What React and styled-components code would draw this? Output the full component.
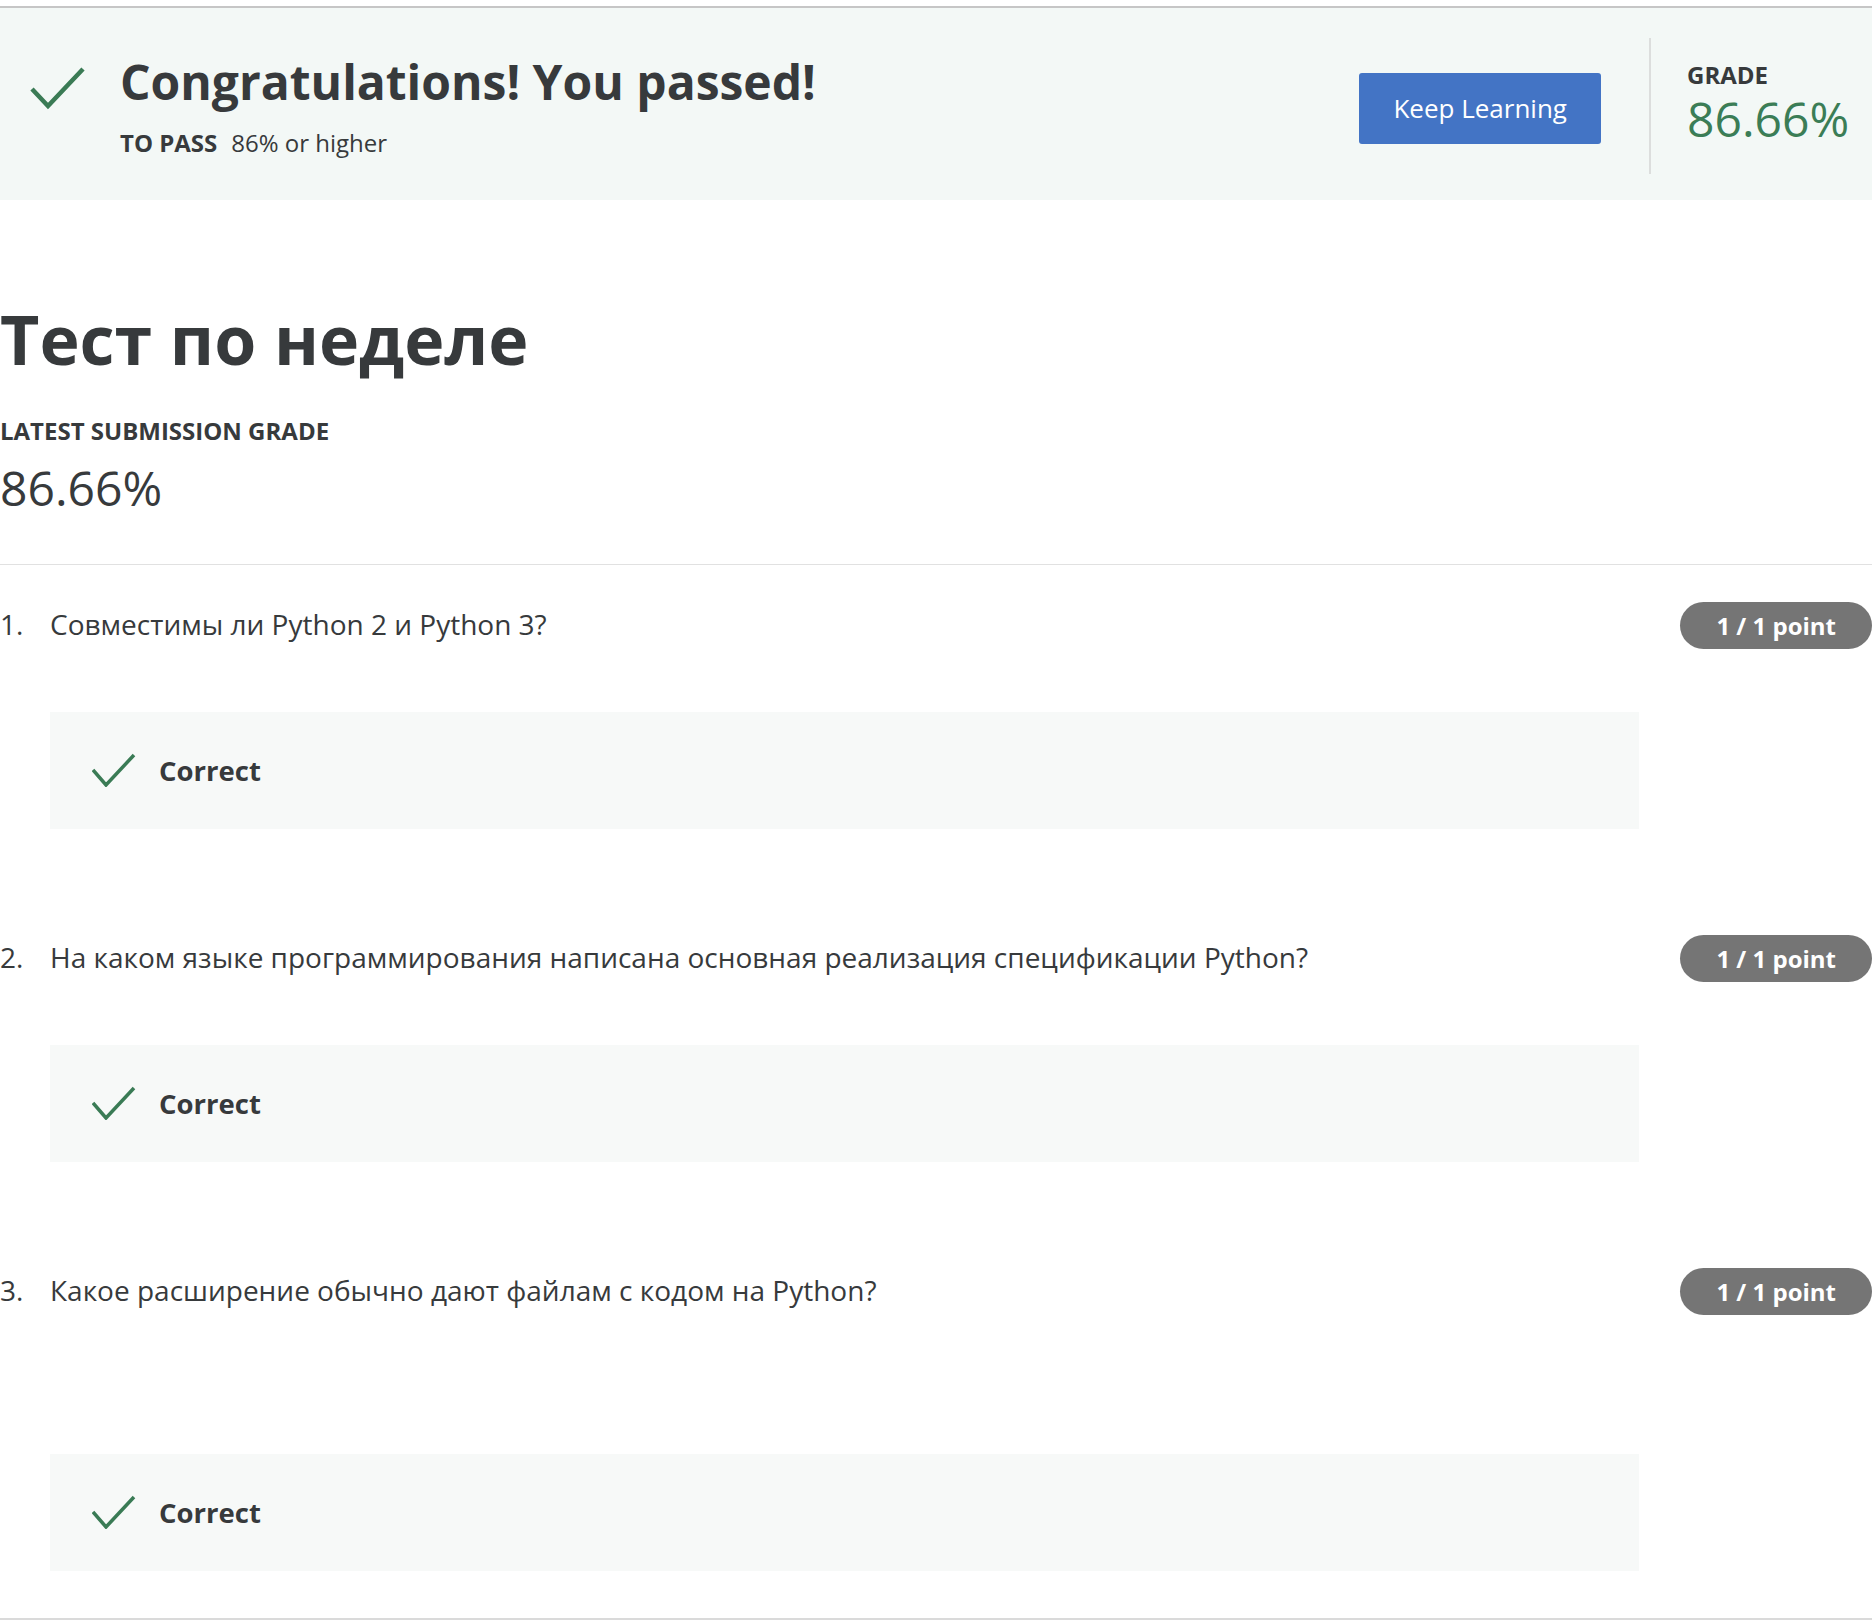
import styled, { createGlobalStyle } from "styled-components";

const GlobalStyle = createGlobalStyle`
  html, body {
    margin: 0;
    padding: 0;
    background: #fff;
  }
  body {
    font-family: "Open Sans", "Noto Sans", sans-serif;
    color: #373a3c;
  }
  * { box-sizing: border-box; }
`;

const questions = [
  { n: 1, text: "Совместимы ли Python 2 и Python 3?", answerGap: 63 },
  { n: 2, text: "На каком языке программирования написана основная реализация спецификации Python?", answerGap: 63 },
  { n: 3, text: "Какое расширение обычно дают файлам с кодом на Python?", answerGap: 139 },
];

const Check = ({ size = "large" }) =>
  size === "large" ? (
    <BannerIcon width="56" height="44" viewBox="0 0 56 44">
      <polyline points="2,23 18,40 53,3" fill="none" stroke="#3a7b55" strokeWidth="4.5" />
    </BannerIcon>
  ) : (
    <FeedbackIcon width="44" height="34" viewBox="0 0 44 34">
      <polyline points="1,17 14,32 42,2" fill="none" stroke="#3a7b55" strokeWidth="3.5" />
    </FeedbackIcon>
  );

const App = () => {
  return (
    <Page>
      <GlobalStyle />
      <Banner>
        <Check />
        <BannerText>
          <BannerTitle>Congratulations! You passed!</BannerTitle>
          <PassLine>
            <strong>TO PASS</strong>
            <span>86% or higher</span>
          </PassLine>
        </BannerText>
        <KeepButton>Keep Learning</KeepButton>
        <Divider />
        <GradeBlock>
          <Label>GRADE</Label>
          <GradeValue green>86.66%</GradeValue>
        </GradeBlock>
      </Banner>

      <Header>
        <Title>Тест по неделе</Title>
        <Label>LATEST SUBMISSION GRADE</Label>
        <GradeValue>86.66%</GradeValue>
      </Header>

      <QuestionList>
        {questions.map((q) => (
          <Question key={q.n}>
            <Number>{q.n}.</Number>
            <QuestionBody>
              <QuestionText>{q.text}</QuestionText>
              <Feedback gap={q.answerGap}>
                <Check size="small" />
                <FeedbackLabel>Correct</FeedbackLabel>
              </Feedback>
            </QuestionBody>
            <Points>1 / 1 point</Points>
          </Question>
        ))}
      </QuestionList>
    </Page>
  );
};

const Page = styled.div`
  padding: 6px 4px 0 0;
  width: 1876px;
`;

const Banner = styled.section`
  display: flex;
  align-items: flex-start;
  height: 194px;
  padding: 0 0 0 30px;
  border-top: 2px solid #c6c6c6;
  background: #f3f8f6;
`;

const BannerIcon = styled.svg`
  flex-shrink: 0;
  margin-top: 58px;
  display: block;
`;

const FeedbackIcon = styled.svg`
  flex-shrink: 0;
  display: block;
`;

const BannerText = styled.div`
  flex: 1;
  padding-top: 45px;
  margin-left: 34px;
`;

const BannerTitle = styled.h2`
  margin: 0;
  font-size: 48px;
  line-height: 57.6px;
  font-weight: 700;
  color: #373a3c;
`;

const PassLine = styled.div`
  margin-top: 14px;
  font-size: 24px;
  line-height: 36px;
  display: flex;
  gap: 14px;

  strong {
    font-weight: 700;
  }
`;

const KeepButton = styled.button`
  align-self: center;
  display: flex;
  align-items: center;
  margin-top: 8px;
  height: 71px;
  padding: 0 34px;
  border: none;
  border-radius: 3px;
  background: #4374c5;
  color: #fff;
  font-family: inherit;
  font-size: 26px;
  line-height: 36px;
  font-weight: 400;
  cursor: pointer;
`;

const Divider = styled.div`
  align-self: center;
  margin: 4px 0 0 48px;
  width: 2px;
  height: 136px;
  background: #dcdedd;
`;

const GradeBlock = styled.div`
  width: 221px;
  padding: 52px 0 0 36px;
`;

const Label = styled.div`
  font-size: 24px;
  line-height: 30px;
  font-weight: 700;
  color: #373a3c;
`;

const GradeValue = styled.div`
  font-size: 48px;
  line-height: 57.6px;
  font-weight: 400;
  color: ${(p) => (p.green ? "#3b7d56" : "#373a3c")};
`;

const Header = styled.header`
  padding: 98px 0 47px;
  border-bottom: 1px solid #e1e1e1;

  ${Label} {
    margin-top: 36px;
  }

  ${GradeValue} {
    margin-top: 13px;
  }
`;

const Title = styled.h1`
  margin: 0;
  font-size: 68px;
  line-height: 82px;
  font-weight: 700;
  color: #373a3c;
`;

const QuestionList = styled.div`
  display: flex;
  flex-direction: column;
  gap: 59px;
  padding-top: 37px;
  border-bottom: 2px solid #dadada;
`;

const Question = styled.div`
  display: flex;
  align-items: flex-start;
  padding-bottom: 47px;
`;

const Number = styled.div`
  width: 50px;
  flex-shrink: 0;
  font-size: 28px;
  line-height: 44px;
`;

const QuestionBody = styled.div`
  flex: 1;
  min-width: 0;
`;

const QuestionText = styled.div`
  font-size: 28px;
  line-height: 44px;
  color: #373a3c;
`;

const Feedback = styled.div`
  display: flex;
  align-items: center;
  gap: 23px;
  height: 117px;
  margin-top: ${(p) => p.gap + 3}px;
  padding-left: 42px;
  background: #f7f9f8;
`;

const FeedbackLabel = styled.span`
  font-size: 27.5px;
  font-weight: 700;
  color: #373a3c;
`;

const Points = styled.div`
  flex-shrink: 0;
  margin-left: 41px;
  height: 47px;
  padding: 0 36px;
  border-radius: 24px;
  background: #757575;
  color: #fff;
  font-size: 24px;
  font-weight: 700;
  line-height: 47px;
  white-space: nowrap;
`;

export default App;
